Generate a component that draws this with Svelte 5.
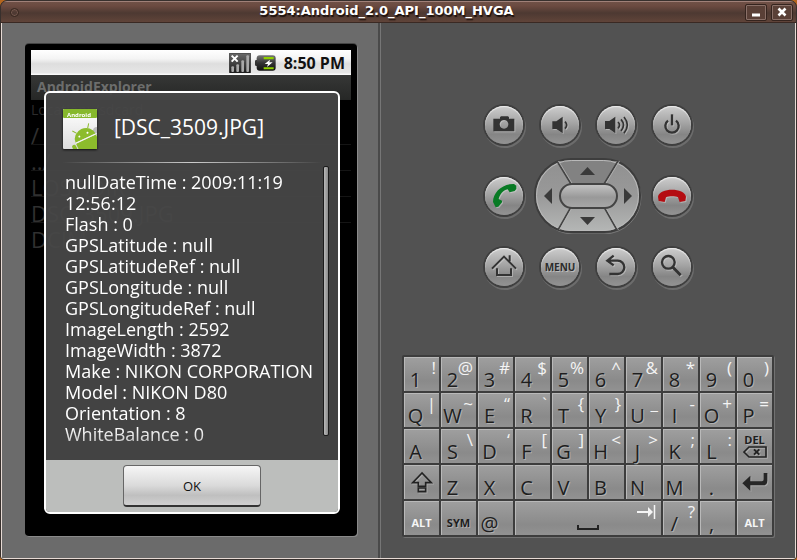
<script>
  const details = [
    'nullDateTime : 2009:11:19 12:56:12',
    'Flash : 0',
    'GPSLatitude : null',
    'GPSLatitudeRef : null',
    'GPSLongitude : null',
    'GPSLongitudeRef : null',
    'ImageLength : 2592',
    'ImageWidth : 3872',
    'Make : NIKON CORPORATION',
    'Model : NIKON D80',
    'Orientation : 8',
    'WhiteBalance : 0'
  ];

  const files = ['/', '../', 'LOST.DIR', 'DSC_3509.JPG', 'DCIM'];

  const keys = [
    ['1', '!'], ['2', '@'], ['3', '#'], ['4', '$'], ['5', '%'],
    ['6', '^'], ['7', '&'], ['8', '*'], ['9', '('], ['0', ')'],
    ['Q', '|'], ['W', '~'], ['E', '“'], ['R', '`'], ['T', '{'],
    ['Y', '}'], ['U', '_', 'under'], ['I', '-'], ['O', '+'], ['P', '='],
    ['A', ''], ['S', '\\'], ['D', '‘'], ['F', '['], ['G', ']'],
    ['H', '<'], ['J', '>'], ['K', ';'], ['L', ':'], ['DEL', '', 'del'],
    ['Shift', '', 'shift'], ['Z', ''], ['X', ''], ['C', ''], ['V', ''],
    ['B', ''], ['N', ''], ['M', ''], ['.', ''], ['Enter', '', 'enter'],
    ['ALT', '', 'alt'], ['SYM', '', 'sym'], ['@', ''], ['Space', '', 'space'],
    ['/', '?'], [',', ''], ['ALT', '', 'alt']
  ];
</script>

{#snippet key(main, alt, kind)}
  <button class="key {kind ?? ''}" aria-label={main}>
    {#if kind === 'del'}
      <span class="word">DEL</span>
      <svg width="24" height="12" viewBox="0 0 72 36" fill="none" stroke="#222" stroke-width="5">
        <path d="M3 18 L18 3 H69 V33 H18 Z" /><path d="M33 10 L49 26 M49 10 L33 26" stroke-width="6" />
      </svg>
    {:else if kind === 'shift'}
      <svg width="22" height="22" viewBox="0 0 66 66" fill="none" stroke="#222" stroke-width="5">
        <path d="M33 6 L5 35 H22 V46 H44 V35 H61 Z" /><path d="M22 51 H44 V62 H22 Z" />
      </svg>
    {:else if kind === 'enter'}
      <svg width="26" height="20" viewBox="0 0 78 60">
        <path d="M1 34 L25 11 V28 H60 Q65 28 65 22 V3 H76 V26 Q76 40 62 40 H25 V57 Z" fill="#262626" />
      </svg>
    {:else if kind === 'space'}
      <svg class="bar" width="22" height="7" viewBox="0 0 22 7" fill="none" stroke="#222" stroke-width="2">
        <path d="M1 1 V5 H21 V1" />
      </svg>
      <svg class="tab" width="19" height="14" viewBox="0 0 19 14" fill="none" stroke="#f4f4f4" stroke-width="2">
        <path d="M0 7 H14" /><path d="M11 2 L16 7 L11 12 Z" fill="#f4f4f4" stroke="none" /><path d="M17.5 0 V14" stroke-width="1.5" />
      </svg>
    {:else if kind && !alt}
      <span class="word">{main}</span>
    {:else}
      <span class="main">{main}</span>
      <span class="second">{alt}</span>
    {/if}
  </button>
{/snippet}

<div class="desktop">
  <div class="window">
    <header class="titlebar">
      <button class="dot" aria-label="Window menu"></button>
      <h1>5554:Android_2.0_API_100M_HVGA</h1>
      <div class="controls">
        <button aria-label="Minimize"><svg width="10" height="10"><path d="M1 8 H9" stroke="#fff" stroke-width="3" /></svg></button>
        <button aria-label="Close"><svg width="10" height="10"><path d="M1.5 1.5 L8.5 8.5 M8.5 1.5 L1.5 8.5" stroke="#fff" stroke-width="2.6" /></svg></button>
      </div>
    </header>

    <main class="content">
      <section class="device">
        <div class="bezel">
          <div class="screen">
            <div class="status">
              <svg width="22" height="20" viewBox="0 0 66 60">
                <defs><linearGradient id="sig" x2="0" y2="1"><stop offset="0" stop-color="#6a6a6a" /><stop offset="1" stop-color="#1c1c1c" /></linearGradient></defs>
                <rect x="1" y="0" width="64" height="60" rx="3" fill="url(#sig)" stroke="#222" stroke-width="2" />
                <g fill="#a8a8a8"><rect x="7" y="40" width="8" height="17" rx="3" /><rect x="22" y="34" width="8" height="23" rx="3" /><rect x="37" y="22" width="8" height="35" rx="3" /><rect x="52" y="7" width="8" height="50" rx="3" /></g>
                <path d="M8 8 L26 26 M26 8 L8 26" stroke="#fff" stroke-width="6" />
              </svg>
              <svg width="21" height="16" viewBox="0 0 63 48">
                <defs><linearGradient id="bat" x2="0" y2="1"><stop offset="0" stop-color="#777" /><stop offset=".5" stop-color="#333" /><stop offset="1" stop-color="#111" /></linearGradient></defs>
                <rect x="0" y="15" width="12" height="18" rx="4" fill="#333" />
                <rect x="5" y="1" width="57" height="46" rx="9" fill="url(#bat)" />
                <path d="M26 6 H56 V13 H26 Z M26 37 H56 V43 H26 Z" fill="#8fd000" />
                <path d="M45 14 L29 27 H39 L36 36 L53 22 H43 Z" fill="#fff" />
              </svg>
              <time>8:50 PM</time>
            </div>
            <div class="apptitle">AndroidExplorer</div>
            <div class="location">Location: /sdcard</div>
            <ul class="files">
              {#each files as file}<li>{file}</li>{/each}
            </ul>

            <div class="dialog" role="dialog" aria-label="[DSC_3509.JPG]">
              <div class="head">
                <svg class="appicon" width="36" height="42" viewBox="0 0 36 42">
                  <defs>
                    <linearGradient id="sheet" x2="0" y2="1"><stop offset="0" stop-color="#fff" /><stop offset="1" stop-color="#dcdcdc" /></linearGradient>
                    <clipPath id="page"><rect x="1" y="0" width="34" height="40" /></clipPath>
                  </defs>
                  <rect x="1" y="0" width="34" height="40" rx="1" fill="url(#sheet)" />
                  <rect x="1" y="0" width="34" height="9" rx="1" fill="#86b82c" />
                  <text x="5" y="8" font-size="6" font-weight="bold" fill="#fff">Android</text>
                  <g clip-path="url(#page)">
                    <circle cx="35" cy="22" r="4" fill="#bbb" />
                    <g transform="rotate(-25 24 30)" fill="#8cbc2c">
                      <path d="M13 29 A11 10 0 0 1 35 29 Z" />
                      <path d="M18 21 L15 17 M30 21 L33 17" stroke="#8cbc2c" stroke-width="1" />
                      <path d="M13 30 H35 V50 H13 Z" />
                      <rect x="8" y="30" width="4" height="15" rx="2" />
                      <path d="M13 29.5 H36" stroke="#f4f4f4" stroke-width="1" />
                      <circle cx="19" cy="25" r="1" fill="#fff" /><circle cx="28" cy="25" r="1" fill="#fff" />
                    </g>
                  </g>
                </svg>
                <h2>[DSC_3509.JPG]</h2>
              </div>
              <div class="rule"></div>
              <div class="scroll">
                <div class="details">
                  {#each details as line}<p>{line}</p>{/each}
                </div>
                <div class="thumb"></div>
              </div>
              <div class="foot"><button class="ok">OK</button></div>
            </div>
          </div>
        </div>
      </section>

      <section class="panel">
        <div class="pad">
          <button class="round" aria-label="Camera">
            <svg viewBox="-57 -57 114 114"><path fill-rule="evenodd" d="M-32 -19 H-12 V-23 L-9 -26 H12 L15 -23 V-19 H31 V19 H-32 Z M0 -15 A13 13 0 1 0 .1 -15 Z" fill="#333" /></svg>
          </button>
          <button class="round" aria-label="Volume down">
            <svg viewBox="-57 -57 114 114"><path d="M-23 -11 H-11 L8 -25 V25 L-11 12 H-23 Z" fill="#333" /><path d="M15 -10 Q25 0 15 11" /></svg>
          </button>
          <button class="round" aria-label="Volume up">
            <svg viewBox="-57 -57 114 114"><path d="M-33 -12 H-20 L-2 -25 V25 L-20 12 H-33 Z" fill="#333" /><path d="M6 -9 Q15 0 6 10 M15 -17 Q30 0 15 18 M24 -24 Q44 0 24 25" /></svg>
          </button>
          <button class="round" aria-label="Power">
            <svg viewBox="-57 -57 114 114"><path d="M-12 -13 A20 20 0 1 0 12 -13" stroke-width="7" /><path d="M0 -32 V1" stroke-width="7" /></svg>
          </button>

          <button class="round" aria-label="Call">
            <svg viewBox="-57 -57 114 114"><path d="M-33 18 C-33 -12 -4 -37 30 -36 L37 -31 V-21 L32 -15 L17 -11 L11 -20 C-3 -17 -13 -4 -16 9 L-6 14 V19 L-17 32 L-25 34 Z" fill="#087a24" stroke="none" /></svg>
          </button>
          <div class="dpad" role="group" aria-label="Direction pad">
            <svg width="108" height="76" viewBox="0 0 108 76">
              <defs>
                <linearGradient id="wheel" x2="0" y2="1"><stop offset="0" stop-color="#909090" /><stop offset=".5" stop-color="#999" /><stop offset="1" stop-color="#b5b7b6" /></linearGradient>
                <linearGradient id="hub" x2="0" y2="1"><stop offset="0" stop-color="#c6c6c6" /><stop offset=".55" stop-color="#999" /><stop offset="1" stop-color="#a8a8a8" /></linearGradient>
              </defs>
              <rect x="2" y="2" width="105" height="74" rx="37" fill="none" stroke="#777" />
              <rect x="1" y="1" width="105" height="73" rx="36" fill="url(#wheel)" stroke="#3d3d3d" stroke-width="2" />
              <path d="M23 3 H84 L70 26 H37 Z" fill="#828282" />
              <rect x="2.5" y="2.5" width="102" height="70" rx="35" fill="none" stroke="#b9b9b9" />
              <path d="M23 3 L37 26 M84 3 L70 26 M37 49 L24 72 M70 49 L83 72" stroke="#444" stroke-width="1.6" />
              <path d="M24.500 3 L38.500 26 M85.500 3 L71.500 26 M38.500 49 L25.500 72 M71.500 49 L84.500 72" stroke="#b4b4b4" stroke-width=".8" />
              <rect x="26" y="26" width="57" height="24" rx="12" fill="url(#hub)" stroke="#444" stroke-width="2" />
              <path d="M46 17 H61 L53.500 9 Z M46 59 H61 L53.500 67 Z M10 38 L18 30 V46 Z M98 38 L90 30 V46 Z" fill="#3a3a3a" />
            </svg>
            <div class="zones">
              <button class="up" aria-label="Up"></button>
              <button class="left" aria-label="Left"></button>
              <button class="center" aria-label="Select"></button>
              <button class="right" aria-label="Right"></button>
              <button class="down" aria-label="Down"></button>
            </div>
          </div>
          <button class="round" aria-label="End call">
            <svg viewBox="-57 -57 114 114"><path d="M-42 2 C-38 -26 38 -26 42 2 L40 15 L23 18 L18 4 C10 0 -10 0 -18 4 L-22 18 L-40 15 Z" fill="#b40d12" stroke="none" /></svg>
          </button>

          <button class="round" aria-label="Home">
            <svg viewBox="-57 -57 114 114"><path d="M-36 5 L0 -31 L36 5 M17 -35 V-17 M-21 4 V24 H21 V4" stroke-width="6" /></svg>
          </button>
          <button class="round menu">MENU</button>
          <button class="round" aria-label="Back">
            <svg viewBox="-57 -57 114 114"><path d="M-7 -34 L-26 -19 L-7 -5 M-26 -19 H5 A20 20 0 0 1 5 21 H-20" stroke-width="7" /></svg>
          </button>
          <button class="round" aria-label="Search">
            <svg viewBox="-57 -57 114 114"><circle cx="-11" cy="-14" r="19" stroke-width="7" /><path d="M2 0 L26 25" stroke-width="9" /></svg>
          </button>
        </div>

        <div class="keyboard">
          {#each keys as [main, alt, kind]}
            {@render key(main, alt, kind)}
          {/each}
        </div>
      </section>
    </main>
  </div>
</div>

<style>
  :global(body) { background: #b5651d; }
  * { box-sizing: border-box; }
  button { padding: 0; border: 0; background: none; color: inherit; font-family: inherit; }
  svg { display: block; }
  h1, h2, p, ul { margin: 0; padding: 0; font-weight: normal; }

  .desktop { background: #b5651d; font-family: "Open Sans", "Noto Sans", sans-serif; }
  .window { display: flex; flex-direction: column; min-height: 100vh; border: 1px solid #38302d; border-radius: 7px 7px 4px 4px; background: #38302d; overflow: hidden; }

  .titlebar { display: flex; align-items: center; height: 22px; padding: 0 3px 0 9px; border-top: 1px solid #a08078; border-bottom: 1px solid #3a2923; background: linear-gradient(#6f5046, #6b4a40 20%, #4d3932 55%, #604439); }
  .titlebar h1 { flex: 1; padding: 0 0 3px 9px; text-align: center; font: bold 13px/16px "DejaVu Sans", sans-serif; color: #fff; text-shadow: 1px 2px 1px #1c100c; }
  .dot { width: 9px; height: 9px; border: 1px solid #37271f; border-radius: 50%; box-shadow: inset 0 0 0 1px #75594f; }
  .controls { display: flex; gap: 4px; }
  .controls button { display: grid; place-items: center; width: 22px; height: 17px; border: 1px solid #35241e; border-radius: 2px; box-shadow: inset 0 0 0 1px #8a7068; background: #5a4037; }

  .content { flex: 1; display: flex; border: solid #e6dad4; border-width: 0 1px 1px; background: #525252; }
  .device { flex: none; padding: 21px 21px 21px 23px; border-right: 2px solid #4a4a4a; background: #6b6b6b; }
  .bezel { padding: 6px; border-radius: 4px; background: #000; box-shadow: 0 -1px 0 #444, 1px 1px 0 #8a8a8a; }
  .screen { position: relative; width: 320px; min-height: 480px; background: #000; }
  .status { display: flex; align-items: center; justify-content: flex-end; gap: 4px; height: 25px; padding-right: 6px; background: linear-gradient(#fff, #f4f4f4 35%, #dedede 55%, #e6e6e6 90%, #fff); }
  .status time { padding-left: 4px; font-size: 16px; line-height: 24px; font-weight: bold; color: #111; }
  .apptitle { height: 25px; padding-left: 6px; background: linear-gradient(#363736, #262726); font-size: 14px; line-height: 24px; font-weight: bold; color: #6c6d6c; }
  .location { height: 19px; font-size: 14px; line-height: 20px; color: #2c2c2c; }
  .files { list-style: none; }
  .files li { height: 26px; border-bottom: 1px solid #151515; font-size: 22px; line-height: 32px; color: #303030; }
  .files li:last-child { border-bottom: 0; }

  .dialog { position: absolute; top: 41px; left: 13px; right: 11px; border: 2px solid #fff; border-radius: 6px; background: rgba(72, 72, 72, 0.93); overflow: hidden; color: #fff; }
  .head { display: flex; align-items: center; gap: 16px; height: 69px; padding: 5px 16px 0; }
  .appicon { filter: drop-shadow(0 1px 1px #111); }
  .head h2 { font-size: 21px; line-height: 28px; padding-bottom: 6px; }
  .rule { height: 1px; margin: 0 16px; background: linear-gradient(90deg, transparent, #ccc 50%, transparent); }
  .scroll { display: flex; justify-content: space-between; height: 297px; padding: 3px 9px 0 19px; }
  .details { flex: 1; height: 282px; padding-top: 6px; font-size: 18px; line-height: 21px; mask-image: linear-gradient(#000 262px, rgba(0, 0, 0, 0.6)); }
  .thumb { flex: none; width: 6px; height: 270px; border: 1px solid #1c1c1c; border-radius: 2px; background: linear-gradient(90deg, #b8b8b8, #8a8a8a); }
  .foot { display: flex; justify-content: center; padding: 5px 0; background: #bcbebc; }
  .ok { width: 138px; height: 42px; border: 1px solid #666; border-bottom: 2px solid #333; border-radius: 4px; background: linear-gradient(#f6f6f6, #dadada 50%, #bfbfbf 75%, #d0d0d0); font-size: 13px; color: #111; }

  .panel { flex: 1; display: flex; flex-direction: column; align-items: center; gap: 53px; padding: 66px 8px 20px; border-left: 1px solid #767676; background: #525252; }
  .pad { display: grid; grid-template-columns: repeat(4, 56px); grid-auto-rows: 71px; place-items: center; }
  .round { display: grid; place-items: center; width: 38px; height: 38px; border-radius: 50%; background: linear-gradient(#cdcdcd, #a4a4a4 45%, #858585 75%, #939393); box-shadow: inset 0 1px 1px #eee, 0 0 0 2px #3f3f3f, 1px 2px 0 2px #6c6c6c; }
  .round svg { width: 38px; height: 38px; fill: none; stroke: #333; stroke-width: 5; filter: drop-shadow(1px 1px 0 rgba(220, 220, 220, 0.45)); }
  .round path[fill] { stroke: none; }
  .menu { font-size: 10px; font-weight: bold; color: #2c2c2c; text-shadow: 1px 1px 0 #bbb; }
  .dpad { grid-column: span 2; display: grid; }
  .dpad > * { grid-area: 1 / 1; }
  .zones { display: grid; grid-template: "left up right" 25px "left center right" 26px "left down right" 25px / 25px 58px 25px; }
  .up { grid-area: up; } .left { grid-area: left; } .center { grid-area: center; } .right { grid-area: right; } .down { grid-area: down; }

  .keyboard { display: grid; grid-template-columns: repeat(10, 35px); grid-auto-rows: 34px; gap: 2px; padding: 2px; border-radius: 2px; background: #3d3d3d; box-shadow: 1px 1px 0 #727272; }
  .key { display: grid; place-items: center; min-width: 0; background: linear-gradient(#9f9f9f, #8a8a8a 70%, #929292); box-shadow: inset 1px 1px 0 #b9b9b9; color: #1e1e1e; text-shadow: 1px 1px 0 #b0b0b0; }
  .key svg { filter: drop-shadow(1px 1px 0 #aaa); }
  .main, .second { grid-area: 1 / 1; }
  .main { place-self: end start; width: 23px; font-size: 20px; line-height: 22px; text-align: center; }
  .second { place-self: start end; padding: 1px 3px 0 0; font-size: 17px; line-height: 20px; color: #f4f4f4; text-shadow: none; }
  .word { font-size: 11px; line-height: 14px; font-weight: bold; }
  .alt, .sym { align-items: end; padding-bottom: 5px; }
  .alt { color: #f6f6f6; text-shadow: none; }
  .del { align-content: center; }
  .del .word { line-height: 12px; }
  .space { grid-column: span 4; }
  .space svg { grid-area: 1 / 1; filter: none; }
  .bar { place-self: end center; margin-bottom: 4px; }
  .tab { place-self: start end; margin: 4px 5px; }
</style>
